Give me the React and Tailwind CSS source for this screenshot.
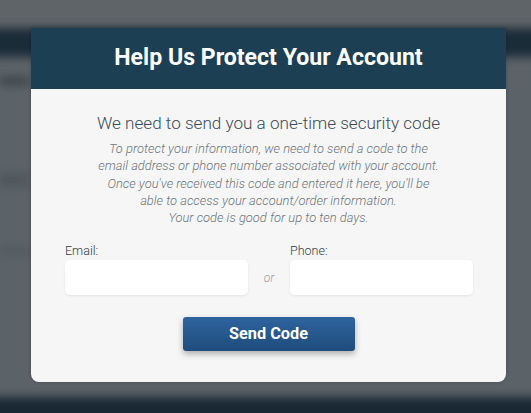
import React from "react";

export default function App() {
  return (
    <div className="relative h-[413px] w-[531px] overflow-hidden bg-[#5a6167] font-['Roboto',sans-serif]">
      {/* blurred page behind the modal, oversized so the blur doesn't fade at the edges */}
      <div className="absolute -inset-[16px] flex flex-col blur-[5px]">
        <div className="h-[44px] bg-[#5f6469]" />
        <div className="h-[29px] bg-[#1b2c39]" />
        <div className="flex-1 bg-[#5b6268] px-[16px] pt-[20px]">
          <div className="h-[8px] w-[30px] bg-[#3a4249]" />
          <div className="mt-[88px] h-[14px] w-[30px] bg-[#4f565c]" />
          <div className="mt-[60px] h-[8px] w-[30px] bg-[#52595f]" />
        </div>
        <div className="h-[32px] bg-[#1a2833]" />
      </div>

      <div className="absolute top-[28px] left-[31px] h-[354px] w-[475px] overflow-hidden rounded-b-[8px] bg-[#f6f6f7] shadow-[0_0_4px_rgba(0,0,0,0.2)]">
        <div className="flex h-[61px] items-center justify-center bg-[#1c3f54]">
          <h1 className="text-[23.1px] font-bold text-white">Help Us Protect Your Account</h1>
        </div>

        <div className="flex flex-col items-center pt-[22px]">
          <h2 className="text-[17.1px] leading-[24px] font-light text-[#3c4a56]">
            We need to send you a one-time security code
          </h2>
          <p className="mt-[5px] text-center text-[12.9px] leading-[17.25px] font-light text-[#6f767c] italic">
            To protect your information, we need to send a code to the
            <br />
            email address or phone number associated with your account.
            <br />
            Once you've received this code and entered it here, you'll be
            <br />
            able to access your account/order information.
            <br />
            Your code is good for up to ten days.
          </p>

          <div className="mt-[17px] flex w-full items-end pr-[33px] pl-[34px]">
            <label className="block w-[183px]">
              <span className="block text-[12.5px] leading-[16px] font-light text-[#2f3d48]">Email:</span>
              <input className="mt-[1px] block h-[35px] w-full rounded-[5px] bg-white shadow-[0_1px_3px_rgba(0,0,0,0.08)] outline-none" />
            </label>
            <span className="flex h-[35px] w-[42px] items-center justify-center text-[12px] font-light text-[#9a9fa3] italic">
              or
            </span>
            <label className="block w-[183px]">
              <span className="block text-[12.5px] leading-[16px] font-light text-[#2f3d48]">Phone:</span>
              <input className="mt-[1px] block h-[35px] w-full rounded-[5px] bg-white shadow-[0_1px_3px_rgba(0,0,0,0.08)] outline-none" />
            </label>
          </div>

          <button className="mt-[22px] h-[34px] w-[172px] rounded-[3px] bg-gradient-to-b from-[#2f649f] to-[#1f4c7c] text-[16.3px] font-bold text-white shadow-[0_3px_6px_rgba(0,0,0,0.3)]">
            Send Code
          </button>
        </div>
      </div>
    </div>
  );
}
